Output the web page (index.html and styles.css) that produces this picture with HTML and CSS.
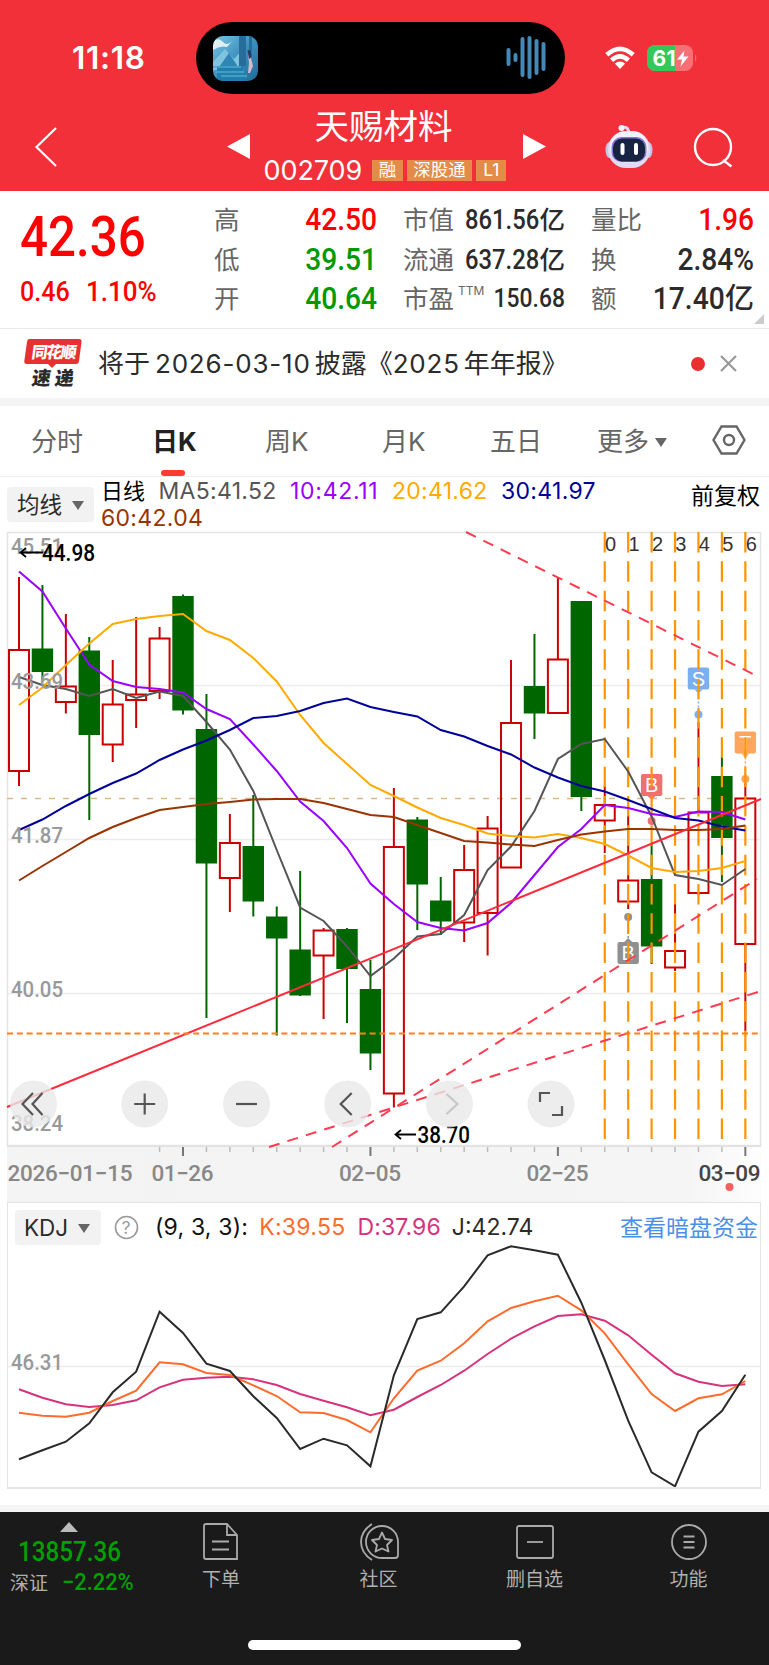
FILE: index.html
```html
<!DOCTYPE html>
<html lang="zh-CN">
<head>
    <meta charset="UTF-8">
    <title>天赐材料 002709</title>
    <link rel="stylesheet" href="styles.css">
</head>
<body>
    <header class="header">
        <div class="status-bar">
            <span class="clock">11:18</span>
            <div class="island">
                <svg class="cover" width="45" height="45" viewBox="0 0 45 45">
                    <defs>
                        <linearGradient id="sky" x1="0" y1="0" x2="1" y2="1">
                            <stop offset="0" stop-color="#7cc4e4"/>
                            <stop offset=".5" stop-color="#3b91bd"/>
                            <stop offset="1" stop-color="#1d6b9c"/>
                        </linearGradient>
                        <clipPath id="cover-clip"><rect width="45" height="45" rx="10"/></clipPath>
                    </defs>
                    <g clip-path="url(#cover-clip)">
                        <rect width="45" height="45" fill="url(#sky)"/>
                        <path d="M0 5Q6 1 10 6T20 4L14 11Q7 9 0 14Z" fill="#dff1f5"/>
                        <path d="M0 26 12 13 21 23 28 15V34H0Z" fill="#7fc3de"/>
                        <path d="M4 34 16 17 27 34Z" fill="#2f86b4"/>
                        <path d="M26 0H33V30H26ZM36 0H39V16H36Z" fill="#276d99"/>
                        <path d="M4 30H30V45H4Z" fill="#217faf"/>
                        <path d="M0 31H28M3 36H31M8 40H34" stroke="#4fa9cc" stroke-width="1.5"/>
                        <path d="M35 19Q38 18 38 22L40 30 37 37H35L36 27Z" fill="#d5b9c9"/>
                        <path d="M34.500 14Q39 13 38.500 21L36 23Z" fill="#203c68"/>
                    </g>
                </svg>
                <svg width="40" height="46" viewBox="0 0 40 46">
                    <g stroke="#4488b5" stroke-width="4" stroke-linecap="round">
                        <path d="M2.5 15V29M9.5 20V25M16.5 4V40M23.5 3V42M30.5 6V38M37.5 9V34"/>
                    </g>
                </svg>
            </div>
            <svg class="wifi" width="30" height="24" viewBox="0 0 30 24">
                <g fill="none" stroke="#fff" stroke-width="4.6">
                    <path d="M1.8 8.8Q15-3.2 28.2 8.8"/>
                    <path d="M6.6 14.3Q15 6.5 23.4 14.3"/>
                </g>
                <path d="M15 23 9.8 17.6Q15 13.2 20.2 17.6Z" fill="#fff"/>
            </svg>
            <svg width="50" height="26" viewBox="0 0 50 26">
                <defs><clipPath id="bat"><rect width="46" height="26" rx="8"/></clipPath></defs>
                <g clip-path="url(#bat)">
                    <rect width="46" height="26" fill="#f87076"/>
                    <rect width="28" height="26" fill="#34c759"/>
                </g>
                <path d="M48 9Q50.5 13 48 17Z" fill="#f87076"/>
                <text x="5.5" y="20.5" class="bat-text" textLength="23">61</text>
                <path d="M37.5 5.5 30 14.5H35L33.5 21.5 41.5 11.5H36.5Z" fill="#fff"/>
            </svg>
        </div>
        <div class="title-bar">
            <svg class="back" width="24" height="42" viewBox="0 0 24 42"><path d="M22 2 2.500 21 22 40" fill="none" stroke="#fff" stroke-width="2.200"/></svg>
            <svg class="prev" width="23" height="25" viewBox="0 0 23 25"><path d="M23 0V25L0 12.500Z" fill="#fff"/></svg>
            <div class="stock">
                <h1>天赐材料</h1>
                <div class="code-row">
                    <span class="code">002709</span>
                    <span class="tag">融</span>
                    <span class="tag">深股通</span>
                    <span class="tag">L1</span>
                </div>
            </div>
            <svg class="next" width="23" height="25" viewBox="0 0 23 25"><path d="M0 0V25L23 12.500Z" fill="#fff"/></svg>
            <svg class="robot" width="48" height="45" viewBox="0 0 48 45">
                <path d="M16 4Q23 1 24 9" fill="none" stroke="#dcd9f2" stroke-width="3"/>
                <circle cx="16.500" cy="4" r="3" fill="#f4f1ff"/>
                <ellipse cx="4.500" cy="26" rx="4" ry="8" fill="#c8c4e8"/>
                <ellipse cx="43.500" cy="26" rx="4" ry="8" fill="#c8c4e8"/>
                <rect x="3" y="7" width="42" height="37" rx="18" fill="#dedcf3"/>
                <rect x="5" y="7.500" width="38" height="31" rx="15" fill="#f2f1fc"/>
                <rect x="6.500" y="13" width="35" height="25" rx="10" fill="#8377d8"/>
                <rect x="8" y="14.500" width="32" height="23" rx="9" fill="#182342"/>
                <path d="M17.500 21V29M31 21V29" stroke="#fff" stroke-width="4" stroke-linecap="round"/>
            </svg>
            <svg class="search" width="42" height="42" viewBox="0 0 42 42"><g fill="none" stroke="#fff" stroke-width="2.400"><circle cx="20" cy="20" r="18"/><path d="M30 33 38.500 39.500"/></g></svg>
        </div>
    </header>

    <section class="quote">
        <div class="price">
            <div class="last din">42.36</div>
            <div class="change"><span class="din">0.46</span><span class="din">1.10%</span></div>
        </div>
        <div class="stats">
            <span class="label">高</span><span class="value up din">42.50</span>
            <span class="label">市值</span><span class="value small"><span class="din">861.56</span>亿</span>
            <span class="label">量比</span><span class="value up din">1.96</span>
            <span class="label">低</span><span class="value down din">39.51</span>
            <span class="label">流通</span><span class="value small"><span class="din">637.28</span>亿</span>
            <span class="label">换</span><span class="value din">2.84%</span>
            <span class="label">开</span><span class="value down din">40.64</span>
            <span class="label">市盈<sup>TTM</sup></span><span class="value small din">150.68</span>
            <span class="label">额</span><span class="value big-value"><span class="din">17.40</span>亿</span>
        </div>
        <i class="corner"></i>
    </section>

    <section class="notice">
        <svg width="58" height="50" viewBox="0 0 58 50">
            <path d="M5 0H55Q58 0 57.500 3L55 22Q54.700 25 52 25H32L28 29 24 25H3Q0 25 .3 22L3 3Q3.300 0 5 0Z" fill="#e93030"/>
            <g transform="skewX(-8)">
                <text x="9.500" y="18.500" class="logo-top" textLength="45">同花顺</text>
                <text x="13.500" y="46" class="logo-bottom" textLength="42">速递</text>
            </g>
        </svg>
        <span class="notice-text">将于<span class="num">2026-03-10</span>披露《<span class="num n2">2025</span>年年报》</span>
        <i class="dot"></i>
        <svg class="close" width="17" height="17" viewBox="0 0 17 17"><path d="M1 1 16 16M16 1 1 16" stroke="#999" stroke-width="2.200"/></svg>
    </section>

    <nav class="tabs">
        <span>分时</span>
        <span class="active">日K</span>
        <span>周K</span>
        <span>月K</span>
        <span>五日</span>
        <span>更多<i class="caret"></i></span>
        <svg width="34" height="30" viewBox="0 0 34 30"><g fill="none" stroke="#666" stroke-width="2.400"><path d="M9.500 1.500H24.500L32.500 15 24.500 28.500H9.500L1.500 15Z"/><circle cx="17" cy="15" r="5"/></g></svg>
    </nav>

    <section class="ma-bar">
        <div class="picker">均线<i class="caret"></i></div>
        <div class="ma-list">
            <span class="ma-name">日线</span>
            <span class="ma5">MA5:41.52</span>
            <span class="ma10">10:42.11</span>
            <span class="ma20">20:41.62</span>
            <span class="ma30">30:41.97</span>
            <span class="ma60">60:42.04</span>
        </div>
        <span class="adjust">前复权</span>
    </section>

    <svg class="k-chart" id="k-chart" width="769" height="671" viewBox="0 531 769 671"></svg>

    <section class="kdj">
        <div class="kdj-bar">
            <div class="picker">KDJ<i class="caret"></i></div>
            <svg class="help" width="25" height="25" viewBox="0 0 25 25"><circle cx="12.500" cy="12.500" r="11" fill="none" stroke="#999" stroke-width="1.600"/><text x="7.800" y="18.500" class="help-text">?</text></svg>
            <span class="kdj-param">(9, 3, 3):</span>
            <span class="kdj-k">K:39.55</span>
            <span class="kdj-d">D:37.96</span>
            <span class="kdj-j">J:42.74</span>
            <span class="link">查看暗盘资金</span>
        </div>
        <svg id="kdj-chart" width="752" height="242" viewBox="8 1245 752 242"></svg>
    </section>

    <footer class="bottom-bar">
        <div class="index">
            <i class="arrow-up"></i>
            <div class="index-value"><span class="din">13857.36</span></div>
            <div class="index-change">深证<span class="din">−2.22%</span></div>
        </div>
        <div class="nav-item">
            <svg width="40" height="38" viewBox="0 0 40 38"><g fill="none" stroke="#aaa" stroke-width="1.800"><path d="M5 1H26L36 12V36H5Q3 36 3 34V3Q3 1 5 1Z"/><path d="M26 1V12H36M11 18.500H28M11 26.500H28"/></g></svg>
            <span>下单</span>
        </div>
        <div class="nav-item">
            <svg width="42" height="38" viewBox="0 0 42 38"><g fill="none" stroke="#aaa" stroke-width="1.800"><path d="M14 1Q3 8 3 19T14 37"/><path d="M24 3A16 16 0 1 0 24 35H37Q40 35 40 32V19A16 16 0 0 0 24 3Z"/><path d="M24 9.500 27 16 34 17 29 22 30.500 28.500 24 25.500 17.500 28.500 19 22 14 17 21 16Z" stroke-linejoin="round"/></g></svg>
            <span>社区</span>
        </div>
        <div class="nav-item">
            <svg width="40" height="38" viewBox="0 0 40 38"><g fill="none" stroke="#aaa" stroke-width="1.800"><rect x="2" y="3" width="36" height="32" rx="2"/><path d="M12 19H28"/></g></svg>
            <span>删自选</span>
        </div>
        <div class="nav-item">
            <svg width="40" height="38" viewBox="0 0 40 38"><g fill="none" stroke="#aaa" stroke-width="1.800"><circle cx="20" cy="19" r="17"/><path d="M14.500 13.500H25.500M14.500 19H25.500M14.500 24.500H25.500"/></g></svg>
            <span>功能</span>
        </div>
        <i class="home-bar"></i>
    </footer>

    <script>
        // candle: [color, high, low, body top, body bottom]
        const candles = [
            ['r', 577, 786, 650, 771], ['g', 585, 680, 648.5, 672], ['r', 614, 713.5, 686.5, 702],
            ['g', 637, 820, 650.5, 735], ['r', 660, 762, 704.5, 744.5], ['r', 617, 728, 694.5, 700],
            ['r', 627, 699, 638.5, 691], ['g', 594.5, 714.5, 596, 710.5], ['g', 694, 1018, 729, 863.5],
            ['r', 814, 912, 843, 878], ['g', 795, 916.5, 846, 901.5], ['g', 906.5, 1035.5, 916.5, 938.5],
            ['g', 871, 996, 949.5, 995.5], ['r', 928, 1019, 930.5, 955.5], ['g', 928, 1023, 929, 969],
            ['g', 960, 1070, 989, 1053.5], ['r', 788, 1107.5, 847, 1093.5], ['g', 817, 930, 819.5, 884.5],
            ['g', 877, 935, 900.5, 921.5], ['r', 845, 942, 870, 922.5], ['r', 816, 955.5, 828.5, 913],
            ['r', 660, 867, 723, 867.5], ['g', 634, 739, 686, 713.5], ['r', 577, 714, 659.5, 713],
            ['g', 601, 811, 601, 797], ['r', 786, 853, 805, 820.5], ['r', 815, 909, 880.5, 901.5],
            ['g', 843, 964, 879, 946.5], ['r', 904, 971, 951, 967.5], ['r', 722, 895, 812.5, 893],
            ['g', 757, 882, 776, 838], ['r', 783, 1031, 798.5, 944]
        ];
        const maLines = [
            ['#555555', [677, 685, 689, 696, 689, 698, 691.5, 696, 722, 749.5, 791, 850, 907.5, 921, 946.5, 976, 958.5, 936.5, 934, 915, 870, 846.5, 811, 759, 744, 739, 771.5, 816.5, 875, 879, 885, 869]],
            ['#9900ff', [571.5, 591.5, 628.5, 664.5, 681, 687, 689, 692.5, 709, 719, 744.5, 771, 801.5, 821, 848, 883.5, 904, 922, 928, 930.5, 923, 903, 875, 847, 829, 805, 808, 814, 817, 811.5, 812, 819.5]],
            ['#ffaa00', [705, 687.5, 665, 643.5, 624, 619, 616, 614, 631, 640, 658, 681.5, 715, 743, 764, 785, 796, 807.5, 818, 825, 833.5, 836, 837.5, 834, 838, 844, 855.5, 868, 872, 871, 868, 861]],
            ['#000099', [830, 819.5, 806, 794, 783, 773.5, 760, 749.5, 740.5, 730, 718, 716, 711, 703, 698.5, 707, 712, 716.5, 730, 736.5, 746, 754.5, 767.5, 777.5, 786, 791.5, 800, 809, 818, 820.5, 826.5, 830.5]],
            ['#993300', [880.5, 866, 852, 838, 827, 818, 810, 807, 804, 802, 799.5, 799, 799, 803, 809, 815, 817, 825, 833, 841, 842.5, 844.5, 846, 840, 834.5, 831.5, 829, 829, 830, 830, 829, 825.5]]
        ];
        const kdjLines = [
            ['#d6337c', [1389.3, 1397.7, 1404.3, 1407, 1405, 1400.3, 1387.3, 1379.7, 1377.7, 1376.7, 1379.3, 1385, 1394, 1400.7, 1407.3, 1415.3, 1409.7, 1397, 1385, 1370.7, 1354, 1338.7, 1326.3, 1316, 1314.3, 1320.7, 1335.3, 1354.7, 1373.3, 1381.7, 1386, 1384.3]],
            ['#ff6b2c', [1412.7, 1415.7, 1416.7, 1412.7, 1401, 1390.7, 1362.3, 1364.3, 1373, 1375, 1385.3, 1396, 1412.3, 1413, 1420, 1432.3, 1398.3, 1370.7, 1360.7, 1343.3, 1321.3, 1308, 1301.3, 1295.7, 1310.3, 1333.3, 1364.3, 1394, 1411, 1398.3, 1394.3, 1381]],
            ['#2a2a2a', [1459.3, 1450.3, 1441.7, 1423.3, 1392.3, 1371.7, 1311.7, 1333, 1363.7, 1371, 1396.3, 1418, 1449, 1438.7, 1445.3, 1466.3, 1375.3, 1319, 1312.3, 1286.3, 1255.3, 1246.3, 1250.3, 1254.7, 1302.7, 1360, 1420.7, 1472.3, 1486.3, 1431.7, 1411, 1374.7]]
        ];

        const px = i => 19 + 23.43 * i;
        const line = (x1, y1, x2, y2, cls) => `<line x1="${x1}" y1="${y1}" x2="${x2}" y2="${y2}" class="${cls}"/>`;
        const text = (x, y, cls, len, str) => `<text x="${x}" y="${y}" class="${cls}" textLength="${len}" lengthAdjust="spacingAndGlyphs">${str}</text>`;
        // dates are spaced out instead of stretched
        const date = (x, cls, len, str) => `<text x="${x}" y="1180.5" class="${cls}" textLength="${len}">${str}</text>`;
        const curve = ([color, ys]) => `<polyline points="${ys.map((y, i) => px(i) + ',' + y).join(' ')}" fill="none" stroke="${color}" stroke-width="2"/>`;

        // date axis strip
        let out = '<defs><linearGradient id="strip"><stop offset="0" stop-color="#f4f4f4"/><stop offset=".2" stop-color="#f3f3f3"/><stop offset=".9" stop-color="#f5f5f5"/><stop offset="1" stop-color="#fdfdfd"/></linearGradient></defs>';
        out += '<rect x="7" y="1147" width="754" height="55" fill="url(#strip)"/>';
        out += '<rect x="7.5" y="532.5" width="753" height="613" class="frame"/>';
        [685.5, 839.5, 993.5].forEach(y => out += line(7, y, 761, y, 'grid'));
        out += line(7, 1146, 761, 1146, 'base');
        out += line(7, 798.5, 761, 798.5, 'last-line');

        // candles
        candles.forEach(([c, high, low, top, bottom], i) => {
            const x = px(i);
            if (c === 'g') {
                out += line(x, high, x, low, 'wick-g');
                out += `<rect x="${x - 10.7}" y="${top}" width="21.4" height="${bottom - top}" class="body-g"/>`;
            } else {
                out += line(x, high, x, top, 'wick-r') + line(x, bottom, x, low, 'wick-r');
                out += `<rect x="${x - 10}" y="${top}" width="20" height="${bottom - top}" class="body-r"/>`;
            }
        });

        // trade marks
        const mark = (i, top, dotY, color, letter, up) => {
            const x = px(i);
            const tip = up ? `M${x - 4} ${top}L${x} ${top - 4}L${x + 4} ${top}Z` : `M${x - 4} ${top + 22}L${x} ${top + 26}L${x + 4} ${top + 22}Z`;
            out += `<line x1="${x}" y1="${up ? top : top + 22}" x2="${x}" y2="${dotY}" stroke="${color}" stroke-width="1.500" stroke-dasharray="2 2"/>`;
            out += `<circle cx="${x}" cy="${dotY}" r="4" fill="${color}"/>`;
            out += `<rect x="${x - 10.7}" y="${top}" width="21.4" height="22" rx="2" fill="${color}"/><path d="${tip}" fill="${color}"/>`;
            out += `<text x="${x}" y="${top + 18}" class="mark-text">${letter}</text>`;
        };
        mark(29, 667.5, 714.5, '#7ab0f2', 'S', false);
        mark(31, 731.5, 779, '#ffa65c', 'T', false);
        mark(27, 774, 821, '#f06f6f', 'B', false);
        mark(26, 942, 917, '#909090', 'B', true);

        out += [0, 1, 2, 3, 4, 5, 6].map(n => line(px(25 + n), 532, px(25 + n), 1139, 'cycle')).join('');
        out += maLines.map(curve).join('');

        // drawn lines
        out += line(7, 1107, 761, 799, 'trend');
        out += line(466, 532, 757, 676, 'trend-dash');
        out += line(269, 1147, 761, 991, 'trend-dash');
        out += line(332, 1147, 757, 879, 'trend-dash');
        out += line(7, 1033.5, 761, 1033.5, 'alert-line');

        [['45.51', 553.5], ['43.69', 688.5], ['41.87', 842.5], ['40.05', 996.5], ['38.24', 1130.5]].forEach(([t, y]) => out += text(11, y, 'axis', 52, t));
        [0, 1, 2, 3, 4, 5, 6].forEach(n => out += `<text x="${px(25 + n) + .3}" y="551" class="cycle-num">${n}</text>`);
        out += '<path d="M43 552.500H21M26 548 20.500 552.500 26 557M416 1134.500H396M401 1130 395.500 1134.500 401 1139" class="arrow"/>';
        out += text(42, 560.5, 'extreme', 53, '44.98') + text(417.5, 1143, 'extreme', 52.5, '38.70');

        // zoom and pan buttons
        const icons = [
            [33.5, 'M-.500-11-11 0-.500 11M9-11-1 0 9 11'],
            [144.7, 'M-10.500 0H10.500M0-10.500V10.500'],
            [246.5, 'M-10.500 0H10.500'],
            [347.7, 'M4-11-7 0 4 11'],
            [449.5, 'M-3-10 8 0-3 10'],
            [551, 'M-11-2V-11H-1M11 2V11H1']
        ];
        icons.forEach(([x, d], i) => out += `<g transform="translate(${x} 1104)"><circle r="23.5" class="btn"/><path d="${d}" class="${i === 4 ? 'btn-icon off' : 'btn-icon'}"/></g>`);

        for (let i = 6; i < 32; i++) {
            const big = i % 8 === 7;
            out += line(px(i), 1147, px(i), big ? 1156 : 1152, big ? 'tick big' : 'tick');
        }
        out += date(7.5, 'date', 125, '2026−01−15') + date(151.5, 'date', 62, '01−26');
        out += date(339, 'date', 62, '02−05') + date(526.5, 'date', 62, '02−25');
        out += date(698.5, 'date now', 62, '03−09');
        out += '<circle cx="729.500" cy="1187" r="4" fill="#f46060"/>';
        document.getElementById('k-chart').innerHTML = out;

        document.getElementById('kdj-chart').innerHTML =
            line(7, 1366.5, 761, 1366.5, 'grid') + text(11, 1369.5, 'axis', 52, '46.31') + kdjLines.map(curve).join('');
    </script>
</body>
</html>
```
FILE: styles.css
```css
body {
    margin: 0;
    width: 769px;
    height: 1665px;
    overflow: hidden;
    background: #fff;
    color: #2b2b2b;
    font-family: Inter, "Noto Sans CJK SC", sans-serif;
}
svg {
    display: block;
    flex: none;
}
.din {
    font-family: Roboto, sans-serif;
    font-weight: 500;
    display: inline-block;
    transform: scaleX(.88);
    transform-origin: left center;
}
/* header */
.header {
    height: 191px;
    background: #f23039;
    color: #fff;
}
.status-bar {
    display: flex;
    align-items: center;
    height: 72px;
    padding: 22px 0 0 72px;
}
.clock {
    width: 124px;
    margin-top: -2px;
    font-size: 31.5px;
    font-weight: 600;
    letter-spacing: 0.7px;
}
.island {
    box-sizing: border-box;
    display: flex;
    align-items: center;
    justify-content: space-between;
    width: 369px;
    height: 72px;
    padding: 0 19px 0 17px;
    border-radius: 36px;
    background: #000;
}
.wifi {
    margin: 0 12px 0 40px;
}
.bat-text {
    font: 700 21px Inter, sans-serif;
    fill: #fff;
}
.title-bar {
    display: flex;
    height: 97px;
    padding-left: 34px;
}
.back {
    margin: 32px 169px 0 0;
}
.prev, .next {
    margin-top: 40px;
}
.stock {
    width: 273px;
    text-align: center;
}
h1 {
    margin: 10px 0 0;
    padding-right: 6px;
    font-size: 34.5px;
    font-weight: 400;
    line-height: 46px;
}
.code-row {
    display: flex;
    align-items: center;
    justify-content: center;
    gap: 4px;
    height: 42px;
    margin-top: -1px;
    padding-right: 3px;
    line-height: 21px;
}
.code {
    margin-right: 6px;
    font-size: 27px;
    letter-spacing: -0.1px;
}
.tag {
    box-sizing: border-box;
    height: 21px;
    padding: 0 6.5px;
    background: #e38b47;
    font-size: 17.5px;
    line-height: 20px;
}
.tag:last-child {
    padding: 0 7px;
}
.robot {
    margin: 30px 40px 0 59px;
}
.search {
    margin-top: 33px;
}
/* quote */
.quote {
    position: relative;
    display: flex;
    box-sizing: border-box;
    height: 138px;
    padding: 9px 0 0 20px;
    border-bottom: 1px solid #e8e8e8;
}
.price {
    width: 194px;
    color: #f00;
}
.last {
    font-size: 56px;
    line-height: 56px;
    margin-top: 9px;
}
.change {
    display: flex;
    margin-top: 8px;
    font-size: 28.5px;
    line-height: 38px;
}
.change .din + .din {
    margin-left: 9px;
    transform: scaleX(.91);
}
.stats {
    display: grid;
    grid-template-columns: 51px 112px 89px 99px 82px 107px;
    grid-template-rows: repeat(3, 39.5px);
    line-height: 39px;
}
.label {
    color: #666;
    font-size: 25.5px;
    white-space: nowrap;
}
.label:nth-child(6n + 3),
.label:nth-child(6n + 5) {
    margin-left: 26px;
}
.value {
    font-size: 32px;
    font-weight: 500;
    text-align: right;
    white-space: nowrap;
}
.value.din, .value .din {
    transform-origin: right center;
}
.value.small {
    font-size: 26px;
}
/* numbers that carry a unit are wider than their cell before scaling */
.value.small:not(.din) {
    margin-left: -20px;
    font-size: 25.5px;
}
.small > .din {
    font-size: 27px;
}
.big-value {
    margin-left: -20px;
    font-size: 29px;
}
.big-value .din {
    font-size: 32px;
}
.up {
    color: #f00;
}
.down {
    color: #009900;
}
sup {
    font-size: 12px;
    vertical-align: 13px;
    line-height: 0;
    margin-left: 4px;
}
.corner {
    position: absolute;
    right: 5px;
    bottom: 4px;
    border-left: 10px solid transparent;
    border-bottom: 10px solid #ccc;
}
/* notice */
.notice {
    display: flex;
    align-items: center;
    height: 69px;
    padding-left: 24px;
    border-bottom: 8px solid #f4f4f4;
}
.logo-top {
    font: 900 16px "Noto Sans CJK SC", sans-serif;
    fill: #fff;
}
.logo-bottom {
    font: 900 19px "Noto Sans CJK SC", sans-serif;
    fill: #2a2a2a;
}
.notice-text {
    width: 592px;
    margin-left: 16px;
    font-size: 26px;
    line-height: 36px;
    white-space: nowrap;
}
.num {
    padding: 0 4px 0 5px;
    letter-spacing: 0.8px;
}
.n2 {
    padding-left: 0;
}
.dot {
    width: 14px;
    height: 14px;
    margin: 0 15px 0 1px;
    border-radius: 50%;
    background: #e93030;
}
/* tabs */
.tabs {
    display: grid;
    grid-template-columns: 121px 113px 117px 108px 107px 115px 34px;
    align-items: center;
    box-sizing: border-box;
    height: 71px;
    padding: 0 0 3px 31px;
    border-bottom: 1px solid #eee;
    color: #666;
    font-size: 26px;
}
.tabs .active {
    position: relative;
    color: #222;
    font-weight: 700;
}
.active::after {
    content: "";
    position: absolute;
    left: 9px;
    top: 49px;
    width: 24px;
    height: 6px;
    border-radius: 3px;
    background: #ff3b30;
}
.caret {
    display: inline-block;
    border: 6px solid transparent;
    border-top: 9px solid #666;
    border-bottom: 0;
    margin-left: 6px;
    vertical-align: 4px;
}
/* ma bar */
.ma-bar {
    display: flex;
    height: 54px;
    padding-left: 7px;
}
.picker {
    box-sizing: border-box;
    width: 87px;
    height: 35px;
    padding-left: 10px;
    border-radius: 4px;
    background: #f2f2f2;
    font-size: 22.5px;
    line-height: 35px;
    white-space: nowrap;
}
.picker .caret {
    margin-left: 10px;
    vertical-align: 3px;
}
.ma-bar .picker {
    flex: none;
    margin-top: 10px;
}
.ma-list {
    display: flex;
    flex: none;
    flex-wrap: wrap;
    align-content: flex-start;
    column-gap: 13.5px;
    box-sizing: border-box;
    width: 597px;
    padding: 1px 60px 0 7px;
    font-size: 23px;
    letter-spacing: 0.3px;
    line-height: 27px;
}
.ma-name {
    color: #000;
    font-size: 22px;
    letter-spacing: 0;
}
.ma5 { color: #555; }
.ma10 { color: #9900ff; letter-spacing: 0.7px; }
.ma20 { color: #ffaa00; }
.ma30 { color: #000099; }
.ma60 { color: #993300; }
.adjust {
    color: #000;
    font-size: 23px;
    line-height: 39px;
    white-space: nowrap;
}
/* k chart */
.frame { fill: none; stroke: #e4e4e4; stroke-width: 1.5; }
.grid { stroke: #ececec; stroke-width: 1.3; }
.base { stroke: #e2e2e2; stroke-width: 2; }
.last-line { stroke: #d9b98c; stroke-width: 1.3; stroke-dasharray: 6 8; }
.wick-g { stroke: #006600; stroke-width: 2; }
.wick-r { stroke: #cc0000; stroke-width: 2; }
.body-g { fill: #006600; }
.body-r { fill: none; stroke: #cc0000; stroke-width: 2; }
.cycle { stroke: #ff9500; stroke-width: 2.2; stroke-dasharray: 20.5 8.83; }
.trend { stroke: #ff2a3c; stroke-width: 2; }
.trend-dash { stroke: #ff3b50; stroke-width: 2; stroke-dasharray: 11 8.3; }
.alert-line { stroke: #ff7f1a; stroke-width: 2; stroke-dasharray: 6 3.8; }
.axis {
    font: 500 22.5px Roboto, sans-serif;
    fill: #999;
}
.extreme {
    font: 500 23px Roboto, sans-serif;
    fill: #000;
}
.arrow {
    fill: none;
    stroke: #000;
    stroke-width: 1.8;
}
.cycle-num {
    font: 20px "Liberation Sans", sans-serif;
    fill: #333;
}
.mark-text {
    font: 20px "Liberation Sans", sans-serif;
    fill: #fff;
    text-anchor: middle;
}
.btn { fill: rgba(232, 232, 232, .8); }
.btn-icon { fill: none; stroke: #555; stroke-width: 2.2; }
.off { stroke: #c8c8c8; }
.tick { stroke: #bbb; stroke-width: 1.5; }
.big { stroke: #777; stroke-width: 2; }
.date {
    font: 500 22.5px Roboto, sans-serif;
    fill: #888;
}
.now { fill: #444; }
/* kdj */
.kdj {
    box-sizing: border-box;
    width: 754px;
    height: 287px;
    margin: 0 0 16px 7px;
    border: 1px solid #e4e4e4;
    border-bottom: 2px solid #e6e6e6;
}
.kdj-bar {
    display: flex;
    align-items: center;
    height: 42px;
    padding: 3px 2px 0 7px;
    margin-bottom: -3px;
    font-size: 23px;
    letter-spacing: 0.3px;
    white-space: nowrap;
}
.kdj-bar .picker {
    width: 86px;
    margin-top: 1px;
    padding-left: 9px;
    letter-spacing: 0;
}
.help {
    margin: 0 16px 0 13px;
}
.help-text {
    font: 17px Inter, sans-serif;
    fill: #999;
    letter-spacing: 0;
}
.kdj-param { color: #111; margin-right: 11px; letter-spacing: 0.2px; }
.kdj-k { color: #ff6b2c; margin-right: 12px; }
.kdj-d { color: #d6337c; margin-right: 11px; letter-spacing: 0.1px; }
.kdj-j { letter-spacing: 0; }
.link {
    margin-left: auto;
    margin-top: -2px;
    color: #4a90e8;
    letter-spacing: 0;
}
/* bottom bar */
.bottom-bar {
    position: relative;
    display: grid;
    grid-template-columns: 142px 158px 157px 155px 153px;
    height: 153px;
    border-top: 7px solid #f4f4f4;
    background: #1a1a1a;
    color: #b0b0b0;
    font-size: 19px;
}
.index {
    display: flex;
    flex-direction: column;
}
.arrow-up {
    width: 0;
    margin: 10px 0 0 60px;
    border: 9px solid transparent;
    border-top: 0;
    border-bottom: 10px solid #bbb;
}
.index-value {
    padding-left: 18px;
    color: #00a000;
    font-size: 27.5px;
    line-height: 38px;
}
.index-change {
    padding-left: 10px;
    margin-top: -1px;
    line-height: 24px;
    white-space: nowrap;
}
.index-change .din {
    margin-left: 14px;
    color: #00a000;
    font-size: 24px;
    transform: scaleX(.91);
}
.nav-item {
    display: flex;
    flex-direction: column;
    align-items: center;
    padding-top: 11px;
    line-height: 38px;
}
.home-bar {
    position: absolute;
    left: 248px;
    bottom: 15px;
    width: 273px;
    height: 10px;
    border-radius: 5px;
    background: #fff;
}
```
